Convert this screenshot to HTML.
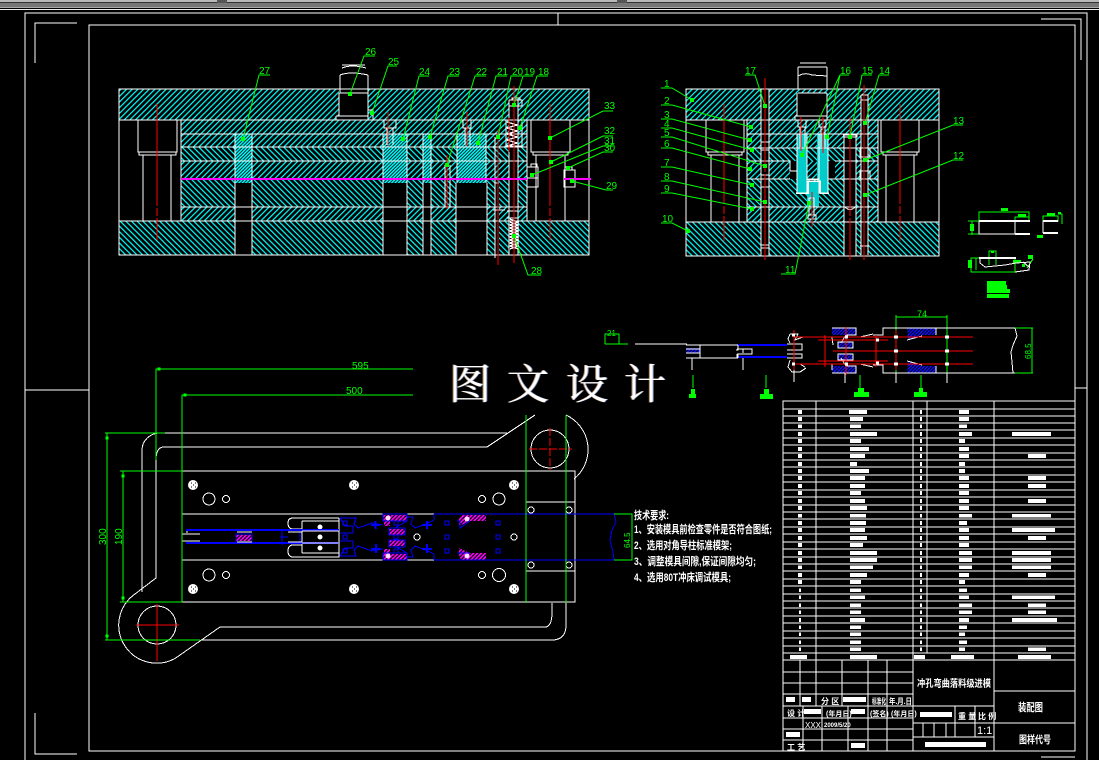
<!DOCTYPE html>
<html><head><meta charset="utf-8"><title>冲孔弯曲落料级进模 装配图</title>
<style>
html,body{margin:0;padding:0;background:#000;width:1099px;height:760px;overflow:hidden}
svg{position:absolute;left:0;top:0}
text{font-family:"Liberation Sans","Noto Sans CJK SC",sans-serif}
.g{fill:#0f0;font-size:10px;stroke:none}
.c{fill:#fff;font-size:8px;font-weight:700;stroke:none;font-family:"Liberation Sans","Noto Sans CJK SC",sans-serif}
.wm{position:absolute;top:352px;font:400 42px "Liberation Serif","Noto Serif CJK SC",serif;color:#fff;text-shadow:1px 0 0 #89b,-1px 0 0 #a86}
</style></head><body>
<svg width="1099" height="760" viewBox="0 0 1099 760" xmlns="http://www.w3.org/2000/svg">
<defs>
<pattern id="h1" width="4" height="4" patternUnits="userSpaceOnUse" patternTransform="rotate(45)"><rect width="4" height="4" fill="#000"/><rect width="1.2" height="4" fill="#0ff"/></pattern>
<pattern id="h2" width="4" height="4" patternUnits="userSpaceOnUse" patternTransform="rotate(-45)"><rect width="4" height="4" fill="#000"/><rect width="1.2" height="4" fill="#0ff"/></pattern>
<pattern id="hc" width="2.4" height="2.4" patternUnits="userSpaceOnUse" patternTransform="rotate(45)"><rect width="2.4" height="2.4" fill="#022"/><rect width="1.4" height="2.4" fill="#0ff"/></pattern>
<pattern id="hm" width="2.8" height="2.8" patternUnits="userSpaceOnUse" patternTransform="rotate(45)"><rect width="2.8" height="2.8" fill="#000"/><rect width="1.6" height="2.8" fill="#f0f"/></pattern>
<pattern id="hb" width="2.4" height="2.4" patternUnits="userSpaceOnUse" patternTransform="rotate(45)"><rect width="2.4" height="2.4" fill="#000"/><rect width="1.4" height="2.4" fill="#11f"/></pattern>
</defs>
<rect width="1099" height="760" fill="#000"/>
<!-- top bar -->
<rect x="0" y="0" width="1099" height="2" fill="#b9b9b9"/>
<rect x="0" y="2" width="1099" height="1" fill="#333"/>
<rect x="0" y="3" width="1099" height="4" fill="#777"/>
<rect x="0" y="7" width="1099" height="1" fill="#aaa"/>
<rect x="217" y="0" width="10" height="3" fill="#555"/>
<rect x="617" y="0" width="10" height="3" fill="#555"/>
<rect x="0" y="9" width="1099" height="1" fill="#eee"/>

<g fill="none" stroke="#fff" shape-rendering="crispEdges">
<!-- frames -->
<path d="M25 760V13H1087V760M89 25H1075V751H89ZM35 63V23H77M35 713V754H77M1041 19H1081V60M25 390H89M1075 388H1087M558 13V25M1041 757H1075" stroke-width="1"/>
</g>

<!-- LEFT SECTION VIEW -->
<g shape-rendering="crispEdges">
<rect x="119" y="89" width="470" height="31" fill="url(#h1)"/>
<rect x="119" y="221" width="470" height="34" fill="url(#h2)"/>
<rect x="181" y="120" width="346" height="14" fill="url(#h1)"/>
<rect x="181" y="134" width="346" height="13" fill="url(#h1)"/>
<rect x="181" y="147" width="346" height="14" fill="url(#h2)"/>
<rect x="181" y="161" width="346" height="18" fill="url(#h1)"/>
<rect x="181" y="179" width="346" height="28" fill="url(#h2)"/>
<rect x="181" y="207" width="346" height="14" fill="url(#h1)"/>
<g fill="#000">
<rect x="339" y="65" width="29" height="55"/><rect x="336" y="116" width="32" height="4"/>
<rect x="138" y="120" width="39" height="32"/><rect x="143" y="155" width="28" height="66"/>
<rect x="531" y="120" width="39" height="32"/><rect x="536" y="152" width="29" height="69"/>
<rect x="235" y="183" width="17" height="72"/><rect x="383" y="183" width="24" height="72"/>
<rect x="423" y="183" width="8" height="72"/><rect x="456" y="183" width="31" height="72"/>
<rect x="495" y="183" width="4" height="72"/><rect x="509" y="100" width="9" height="155"/>
<rect x="527" y="167" width="11" height="21"/><rect x="564" y="170" width="11" height="18"/>
</g>
<g fill="url(#hc)"><rect x="235" y="134" width="17" height="49"/><rect x="383" y="134" width="24" height="49"/><rect x="423" y="134" width="8" height="49"/><rect x="457" y="134" width="29" height="49"/></g>
<g fill="none" stroke="#fff">
<path d="M119 89H589V255H119ZM119 120H589M119 221H589"/>
<path d="M181 120V221M527 120V221M181 134H527M181 147H527M181 161H527M181 207H527"/>
<path d="M340 75V93H368V75M342 68Q352 64 366 68M340 75Q350 71 368 75M342 65H365M339 93V116M368 93V116M336 116H368V120M336 116V120M368 110H373V120"/>
<path d="M138 120V152H177V120M139 152V155H176V152M143 155V221M171 155V221"/>
<path d="M531 120V152H570V120M533 152V155H568V152M536 155V221M565 155V221"/>
<path d="M235 134V255M252 134V255M383 134V255M407 134V255M423 134V255M431 134V255M457 134V183M486 134V183M456 183V255M487 183V255M495 183V258M509 100V255M518 100V255M495 183H499"/>
<path d="M384 120H396V128H384ZM387 128V145M393 128V145M463 120H471V128H463ZM465 128V145M470 128V145"/>
<path d="M445 165V207M450 165V207M509 100H522V106H509M512 100V98H520V100M506 120H522M506 120V146H522V120"/>
<path d="M493 210H505M507 211H518V218H507M495 183V137"/>
<path d="M527 167H538V187H527ZM527 178H538M531 167V164H537V167"/>
<path d="M564 170H575V187H564ZM565 170V167H572V170"/>
</g>
<g stroke="#fff" stroke-width="1.3" fill="none"><path d="M510 219L518 222L510 225L518 228L510 231L518 234L510 237L518 240L510 243L518 246L510 249M510 222L518 225L510 228L518 231L510 234L518 237L510 240L518 243L510 246L518 249M507 122L517 125L507 128L517 131L507 134L517 137L507 140L517 143L507 146"/></g>
<g stroke="#f0f" stroke-width="2" fill="none"><path d="M181 179H527M564 179H591"/></g>
</g>
<path d="M157 104V206M157 208V216M157 218V240M550 104V206M550 208V216M550 218V240M388 112V146M467 112V146M447 155V209M498 130V265M514 86V263M509 118V152" fill="none" stroke="#f00" stroke-width="1" shape-rendering="crispEdges"/>

<!-- CENTER SECTION VIEW -->
<g shape-rendering="crispEdges">
<rect x="686" y="89" width="253" height="31" fill="url(#h1)"/>
<rect x="686" y="222" width="253" height="34" fill="url(#h2)"/>
<rect x="747" y="120" width="131" height="14" fill="url(#h1)"/>
<rect x="747" y="134" width="131" height="14" fill="url(#h1)"/>
<rect x="747" y="148" width="131" height="13" fill="url(#h2)"/>
<rect x="747" y="161" width="131" height="18" fill="url(#h1)"/>
<rect x="747" y="179" width="131" height="28" fill="url(#h2)"/>
<rect x="747" y="207" width="131" height="15" fill="url(#h1)"/>
<g fill="#000">
<rect x="797" y="93" width="30" height="27"/>
<rect x="706" y="120" width="38" height="32"/><rect x="711" y="155" width="28" height="67"/>
<rect x="881" y="120" width="38" height="32"/><rect x="886" y="155" width="28" height="67"/>
<rect x="761" y="89" width="8" height="167"/><rect x="844" y="135" width="12" height="121"/>
<rect x="861" y="95" width="7" height="161"/>
<rect x="790" y="161" width="8" height="18"/><rect x="828" y="161" width="7" height="18"/>
<rect x="739" y="120" width="8" height="102"/><rect x="878" y="120" width="8" height="102"/>
</g>
<g><rect x="797" y="134" width="10" height="59" fill="#0cc"/><rect x="817" y="134" width="11" height="59" fill="#0cc"/><rect x="807" y="181" width="12" height="26" fill="#0cc"/></g>
<g fill="none" stroke="#fff">
<path d="M686 89H939V256H686ZM686 120H939M686 222H939"/>
<path d="M747 120V222M878 120V222M747 134H878M747 148H878M747 161H790V171H797M747 179H790M835 161H878M828 179H878M747 207H878"/>
<path d="M798 67V89H827V67M800 63H826M798 67H827M798 76Q805 72 812 75L827 76M798 93H827M797 93V116M827 93V116M795 116H827V120M795 116V120"/>
<path d="M706 120V152H744V120M708 152V155H742V152M711 155V222M739 155V222"/>
<path d="M881 120V152H919V120M883 152V155H917V152M886 155V222M914 155V222"/>
<path d="M761 89V256M769 89V256M761 142H769M761 150H769M761 175H769M761 187H769M761 245H769M761 248H769"/>
<path d="M844 135V256M856 135V256M843 135H857V137H843M845 207Q850 212 855 207"/>
<path d="M861 95H868V100H861M861 95V255M868 95V255M860 148H870V157H860ZM860 171H870V179H860Z M860 246H869"/>
<path d="M797 134V193H807V179H819V193H828V134M807 134V179M819 134V179"/>
<path d="M798 120H806V127H798ZM800 127V147M805 127V147M819 120H826V127H819ZM821 127V147M825 127V147"/>
<path d="M809 198H814V215H809ZM808 215H816V219H808Z"/>
<path d="M746 120H745"/>
</g>
<path d="M796 193H808V181H820V193H829M807 179H819" stroke="#fff" stroke-width="1.5" fill="none"/>
</g>
<path d="M724 104V204M724 206V214M724 216V241M900 104V204M900 206V214M900 216V241M765 78V172M765 174V260M850 117V216M850 218V260M864 85V260M801 117V151M823 117V153M812 192V227" fill="none" stroke="#f00" stroke-width="1" shape-rendering="crispEdges"/>

<!-- green leaders -->
<g fill="none" stroke="#0f0" stroke-width="1">
<path d="M270 75H259L243 139M375 56H364L350 94M397 66H388L372 113M429 76H419L403 139M459 76H448L430 137M486 76H475L447 165M507 76H496L478 143M522 76H511L498 137M533 76H523L514 105M548 76H537L520 128"/>
<path d="M613 111H603L550 138M613 136H603L551 162M613 146H603L532 175M613 152H603L568 168M613 190H606L572 181M541 275H528L514 236"/>
<path d="M661 88H672L692 100M661 105H672L751 127M661 119H672L750 140M661 128H672L752 150M661 137H672L765 166M661 148H672L750 169M661 167H672L752 185M661 181H672L765 202M661 193H672L752 209M661 223H672L688 231"/>
<path d="M745 75H755L765 106M849 75H840L802 155M840 75L827 137M872 75H862L850 137M889 75H879L865 123M963 125H953L865 160M963 160H953L865 195M781 274H795L809 203"/>
</g>
<path d="M243 139h.01M350 94h.01M372 113h.01M403 139h.01M430 137h.01M447 165h.01M478 143h.01M498 137h.01M514 105h.01M520 128h.01M550 138h.01M551 162h.01M532 175h.01M568 168h.01M572 181h.01M514 236h.01M692 100h.01M751 127h.01M750 140h.01M752 150h.01M765 166h.01M750 169h.01M752 185h.01M765 202h.01M752 209h.01M688 231h.01M765 106h.01M802 155h.01M827 137h.01M850 137h.01M865 123h.01M865 160h.01M865 195h.01M809 203h.01" stroke="#0f0" stroke-width="4" stroke-linecap="square" fill="none" shape-rendering="crispEdges"/>
<g class="g" font-size="9">
<text class="g" x="259" y="74">27</text><text class="g" x="365" y="55">26</text><text class="g" x="388" y="65">25</text><text class="g" x="419" y="75">24</text><text class="g" x="449" y="75">23</text><text class="g" x="476" y="75">22</text><text class="g" x="497" y="75">21</text><text class="g" x="512" y="75">20</text><text class="g" x="524" y="75">19</text><text class="g" x="538" y="75">18</text>
<text class="g" x="604" y="109">33</text><text class="g" x="604" y="134">32</text><text class="g" x="604" y="144">31</text><text class="g" x="604" y="151">30</text><text class="g" x="606" y="189">29</text><text class="g" x="531" y="274">28</text>
<text class="g" x="664" y="87">1</text><text class="g" x="664" y="104">2</text><text class="g" x="664" y="118">3</text><text class="g" x="664" y="127">4</text><text class="g" x="664" y="136">5</text><text class="g" x="664" y="147">6</text><text class="g" x="664" y="166">7</text><text class="g" x="664" y="180">8</text><text class="g" x="664" y="192">9</text><text class="g" x="662" y="222">10</text>
<text class="g" x="745" y="74">17</text><text class="g" x="840" y="74">16</text><text class="g" x="862" y="74">15</text><text class="g" x="879" y="74">14</text><text class="g" x="953" y="124">13</text><text class="g" x="953" y="159">12</text><text class="g" x="785" y="273">11</text>
</g>

<!-- small parts -->
<g shape-rendering="crispEdges">
<path d="M979 221V212H1029V221M1015 221V217H1029M972 221V235M968 221H979M968 234H979M1043 221V216H1058V222M1058 214H1062V224M971 258H1015V272H971ZM976 258V270M989 265V251H996V265M1033 259L1027 268" fill="none" stroke="#0f0"/>
<g fill="#0f0"><rect x="970" y="224" width="4" height="7"/><rect x="1001" y="208" width="7" height="3"/><rect x="1018" y="214" width="8" height="3"/><rect x="1047" y="213" width="8" height="3"/><rect x="1058" y="212" width="3" height="2"/><rect x="1037" y="235" width="6" height="3"/><rect x="968" y="260" width="4" height="8"/><rect x="1013" y="260" width="8" height="3"/><rect x="1028" y="255" width="5" height="4"/><rect x="1022" y="264" width="3" height="3"/><rect x="991" y="251" width="3" height="2"/>
<rect x="987" y="281" width="19" height="4"/><rect x="987" y="285" width="20" height="4"/><rect x="987" y="289" width="23" height="4"/><rect x="987" y="294" width="22" height="4"/></g>
<path d="M979 221H1030M1015 234H1030M1043 221H1058M1043 233H1058M979 258H1016" stroke="#fff" stroke-width="2" fill="none"/>
<path d="M979 221V234H1015V221M1043 221V233M980 258V263L985 267L1005 265L1016 263L1030 262L1029 270L1015 272M1023 262L1029 267" stroke="#fff" fill="none"/>
</g>

<!-- BOTTOM PLAN VIEW -->
<g fill="none" stroke="#fff" shape-rendering="crispEdges">
<path d="M182 471H575V602H182ZM182 514H526M182 560H526M526 471V602M526 502H575M526 571H575"/>
<path d="M162 433H507M535 415L487 447H163Q156 448 156 460V578L133 595.5A38 38 0 0 0 175 658.5L220 627H545Q552 627 552 612V603M201 640H552Q566 640 566 625V603M142 592V450A18 17 0 0 1 160 433"/>
<path d="M566 415A38 38 0 0 1 574 479"/>
<circle cx="157" cy="625" r="19"/><circle cx="550" cy="449" r="19"/>
<circle cx="209" cy="499" r="6"/><circle cx="226" cy="499" r="3.5"/><circle cx="209" cy="575" r="6"/><circle cx="226" cy="575" r="3.5"/>
<circle cx="482" cy="499" r="3.5"/><circle cx="499" cy="499" r="6"/><circle cx="482" cy="575" r="3.5"/><circle cx="499" cy="575" r="6.5"/>
<circle cx="417" cy="537" r="3"/><circle cx="514" cy="537" r="3"/>
<circle cx="531" cy="510" r="3"/><circle cx="569" cy="510" r="3"/><circle cx="531" cy="565" r="3"/><circle cx="569" cy="565" r="3"/>
<path d="M339 518H293Q288 518 288 523Q288 529 293 529H302M302 521H339M339 553H302M302 545H293Q288 545 288 551Q288 557 293 557H339V518M302 521V553"/>
</g>
<g fill="#fff" stroke="#fff"><circle cx="193" cy="485" r="4.5"/><circle cx="354" cy="485" r="4.5"/><circle cx="193" cy="589" r="4.5"/><circle cx="354" cy="589" r="4.5"/><circle cx="514" cy="485" r="4.5"/><circle cx="514" cy="589" r="4.5"/></g>
<path d="M191 483h1M195 483h1M191 487h1M195 487h1M193 485h1M352 483h1M356 483h1M352 487h1M356 487h1M354 485h1M191 587h1M195 587h1M191 591h1M195 591h1M193 589h1M352 587h1M356 587h1M352 591h1M356 591h1M354 589h1M512 483h1M516 483h1M512 487h1M516 487h1M514 485h1M512 587h1M516 587h1M512 591h1M516 591h1M514 589h1" stroke="#000" stroke-width="1" fill="none" shape-rendering="crispEdges"/>
<g fill="#fff"><circle cx="320" cy="527" r="2.5"/><circle cx="320" cy="537" r="2.5"/><circle cx="320" cy="548" r="2.5"/></g>
<g fill="url(#hm)" shape-rendering="crispEdges"><rect x="383" y="515" width="24" height="6"/><rect x="389" y="529" width="16" height="6"/><rect x="389" y="540" width="16" height="6"/><rect x="383" y="554" width="24" height="6"/><rect x="384" y="520" width="6" height="6"/><rect x="384" y="549" width="6" height="6"/><path d="M461 515H486V521H470L459 526V519Z"/><path d="M461 560H486V553H470L459 548V555Z"/><rect x="236" y="535" width="16" height="6"/></g>
<g fill="none" stroke="#00f" stroke-width="1" shape-rendering="crispEdges">
<rect x="383" y="514" width="24" height="7"/><rect x="389" y="528" width="16" height="7"/><rect x="389" y="540" width="16" height="7"/><rect x="383" y="553" width="24" height="7"/><rect x="236" y="534" width="16" height="8"/>
<path d="M434 514H614M434 560H614M434 514V520M434 560V554M614 514L616 522L612 530L610 540L613 552L614 560"/>
<path d="M340 518H356L354 524L358 528L372 523L383 525M340 556H356L354 550L358 546L372 551L383 549M340 518L345 526H353V533H340M340 556L345 548H353V541H340"/>
<path d="M407 517H413L411 524L415 528L428 523L434 520M407 557H413L411 550L415 546L428 551L434 554M407 521L395 528M407 553L395 546"/>
<path d="M457 521H460L460 528L470 521M457 553L470 553"/>
<rect x="343" y="521" width="4" height="4"/><rect x="343" y="549" width="4" height="4"/><rect x="343" y="535" width="4" height="4"/><rect x="394" y="521" width="4" height="4"/><rect x="394" y="549" width="4" height="4"/><rect x="394" y="535" width="4" height="4"/>
<rect x="445" y="521" width="4" height="4"/><rect x="445" y="535" width="4" height="4"/><rect x="445" y="549" width="4" height="4"/><rect x="496" y="521" width="4" height="4"/><rect x="496" y="535" width="4" height="4"/><rect x="496" y="549" width="4" height="4"/>
<path d="M300 530V543M282 529V545M280 537H288"/>
</g>
<path d="M186 530H339M186 543H339" stroke="#00f" stroke-width="2" fill="none" shape-rendering="crispEdges"/>
<path d="M186 532H188M237 532H252M237 542H252M288 532H302M288 542H302M302 531H339M302 543H339M182 534H200M182 541H200" stroke="#fff" fill="none" shape-rendering="crispEdges"/>
<path d="M371 525h9M375.5 521v8M422 525h10M427 521v8M371 549h10M376 544v9M422 549h10M427 544v9" stroke="#00f" stroke-width="2" fill="none" shape-rendering="crispEdges"/>
<g fill="#fff"><circle cx="388" cy="518" r="2.5" fill="#fdf"/><circle cx="388" cy="556" r="2.5" fill="#fdf"/><circle cx="467" cy="519" r="2.5" fill="#fdf"/><circle cx="467" cy="556" r="2.5" fill="#fdf"/></g>
<path d="M157 604V661M136 625H179" stroke="#f00" fill="none" shape-rendering="crispEdges"/>
<path d="M550 428V470M529 449H572" stroke="#f00" stroke-dasharray="8 2" fill="none" shape-rendering="crispEdges"/>
<!-- dims -->
<g fill="none" stroke="#0f0" shape-rendering="crispEdges">
<path d="M156 460V369H413M182 602V395H413M105 433H165M105 640H200M107 433V640M120 471H182M120 602H182M123 471V602M526 415V603M566 415V603"/>
<path d="M614 514H632V560H614"/>
</g>
<path d="M159 369h.01M185 395h.01M107 438h.01M107 636h.01M123 476h.01M123 598h.01" stroke="#0f0" stroke-width="3" stroke-linecap="square" fill="none" shape-rendering="crispEdges"/>
<text class="g" x="352" y="369">595</text>
<text class="g" x="346" y="394">500</text>
<text class="g" transform="translate(106,545) rotate(-90)">300</text>
<text class="g" transform="translate(122,545) rotate(-90)">190</text>
<text class="g" style="font-size:8px" transform="translate(630,548) rotate(-90)">64.5</text>

<!-- technical requirements -->
<g fill="#fff" font-weight="700">
<text x="634" y="519" textLength="35" lengthAdjust="spacingAndGlyphs" style="font-size:11px">技术要求:</text>
<text x="634" y="533" textLength="138" lengthAdjust="spacingAndGlyphs" style="font-size:11px">1、安装模具前检查零件是否符合图纸;</text>
<text x="634" y="549" textLength="98" lengthAdjust="spacingAndGlyphs" style="font-size:11px">2、选用对角导柱标准模架;</text>
<text x="634" y="565" textLength="122" lengthAdjust="spacingAndGlyphs" style="font-size:11px">3、调整模具间隙,保证间隙均匀;</text>
<text x="634" y="581" textLength="97" lengthAdjust="spacingAndGlyphs" style="font-size:11px">4、选用80T冲床调试模具;</text>
</g>

<!-- STRIP TOP RIGHT -->
<g shape-rendering="crispEdges" fill="none">
<path d="M605 344V334H619V344M605 344H628" stroke="#0f0"/>
<text class="g" x="607" y="336" style="font-size:8px">21</text>
<path d="M896 373V315M947 373V315M896 317H947M1015 328H1033M1015 373H1033M1032 328V373" stroke="#0f0"/>
<text class="g" x="917" y="317" style="font-size:9px">74</text>
<text class="g" style="font-size:8px" transform="translate(1031,359) rotate(-90)">68.5</text>
<path d="M693 375V388M766 375V388M860 375V390M921 375V390" stroke="#0f0"/>
<g fill="#0f0"><rect x="689" y="394" width="7" height="4"/><rect x="691" y="389" width="4" height="5"/><rect x="760" y="394" width="13" height="5"/><rect x="764" y="389" width="5" height="5"/><rect x="854" y="392" width="15" height="5"/><rect x="858" y="388" width="6" height="4"/><rect x="914" y="392" width="13" height="5"/><rect x="919" y="388" width="4" height="4"/></g>
<rect x="686" y="348" width="14" height="5" fill="url(#hb)"/>
<rect x="832" y="328" width="24" height="7" fill="url(#hb)"/><rect x="838" y="342" width="15" height="6" fill="url(#hb)"/><rect x="838" y="354" width="15" height="6" fill="url(#hb)"/><rect x="832" y="366" width="24" height="7" fill="url(#hb)"/>
<path d="M907 328H936V335H922L908 340Z" fill="url(#hb)"/><path d="M907 373H936V366H922L908 361Z" fill="url(#hb)"/>
<path d="M737 345H787M737 357H787" stroke="#00f" stroke-width="2"/>
<g stroke="#fff">
<path d="M635 344H687M686 345H738M686 358H738M686 349H700M686 353H700M700 345V358M738 345V350H736M738 358V354M737 349H752V354H737M737 354V358M743 349V353"/>
<path d="M787 344H802V350H787M787 354H802V358H787M790 334H798L795 340L803 337M790 334L788 339L790 343M790 360L788 367L792 372H800L806 368M798 364H800L805 367"/>
<path d="M818 337H832L833 345M818 364H832V370M832 328H856V335H846L841 343M832 373H856V366H846L841 358M838 342H853V348H838ZM838 354H853V360H838Z"/>
<path d="M850 337H860L873 334M850 364H860L873 367M873 335H883V328H1015M873 365H883V373H1015M1015 328L1017 336L1013 345L1011 352L1012 362L1013 373"/>
<path d="M907 328H936V335M907 373H936V366M907 340L922 336M907 361L922 365"/>
<path d="M692 358V370M743 358V370M794 370V382M845 373V383M896 373V383M947 373V383"/>
</g>
<g stroke="#f00">
<path d="M794 337H973M818 340H888M833 351H973M794 364H973M818 361H888M794 330V370M825 335V367M846 327V375M876 335V367M896 330V370"/>
</g>
</g>
<path d="M792 335h3M792 364h3M845 337h3M845 364h3M876 340h3M876 363h3M894 337h4M894 351h4M894 364h4M945 337h4M945 351h4M945 364h4" stroke="#fff" stroke-width="3" fill="none" shape-rendering="crispEdges"/>

<!-- PARTS TABLE -->
<g fill="none" stroke="#fff" shape-rendering="crispEdges">
<rect x="783" y="401" width="292" height="350"/>
<path d="M816 401V660M913 401V660M927 401V653M994 401V751M783 409H1075M783 416H1075M783 423H1075M783 430H1075M783 438H1075M783 445H1075M783 453H1075M783 460H1075M783 467H1075M783 475H1075M783 482H1075M783 490H1075M783 497H1075M783 505H1075M783 512H1075M783 519H1075M783 527H1075M783 534H1075M783 542H1075M783 549H1075M783 557H1075M783 564H1075M783 571H1075M783 579H1075M783 586H1075M783 594H1075M783 601H1075M783 608H1075M783 616H1075M783 623H1075M783 631H1075M783 638H1075M783 646H1075M783 653H1075M783 660H1075"/>
<path d="M783 672H913M783 683H913M783 694H913M783 706H994M783 718H913M783 729H913M783 740H913M800 660V706M816 660V706M842 660V706M868 660V751M887 660V751M803 706V751M822 706V751M848 706V751M913 660V751M913 723H994M913 737H994M955 706V737M975 706V737M923 723V737M934 723V737M946 723V737M994 691H1075M994 723H1075"/>
</g>
<g fill="none" stroke="#fff" stroke-width="3.6" shape-rendering="crispEdges">
<!-- col 1 -->
<path d="M798 412h4M798 419h4M798 426.3h4M798 434h4M798 441h4M798 449h4M798 456h4M798 464h4M798 471h4M798 478h4M798 486h4M798 493h4M798 501h4M798 508h4M798 515.7h4M798 523h4M798 530h4M798 538h4M798 545h4M798 553h4M798 560h4M798 567.3h4M798 575h4M798 582h4M799 590.3h2M799 597.3h2M799 605.3h2M799 612.3h2M799 620h2M799 627.3h2M799 634.3h2M799 642.3h2M799 649.3h2M790 657h17"/>
<!-- col 2 -->
<path d="M849 412h18M850 419h13M850 426.3h11M850 434h27M850 441h11M850 449h19M850 456h15M850 464h7M850 471h19M850 478h15M850 486h15M850 493h11M850 501h15M850 508h17M850 515.7h16M850 523h16M850 530h15M850 538h17M850 545h13M850 553h27M850 560h27M850 567.3h23M850 575h17M850 582h11M850 590.3h11M850 597.3h15M850 605.3h11M850 612.3h11M850 620h15M850 627.3h11M850 634.3h11M850 642.3h11M850 649.3h11M850 657h27"/>
<!-- col 3 -->
<path d="M920 412h2M920 419h2M920 426.3h2M920 434h2M920 441h2M920 449h2M920 456h2M920 464h2M920 471h2M920 478h2M920 486h2M920 493h2M920 501h2M920 508h2M920 515.7h2M920 523h2M920 530h2M920 538h2M920 545h2M920 553h2M920 560h2M920 567.3h2M920 575h2M920 582h2M920 590.3h2M920 597.3h2M920 605.3h2M920 612.3h2M920 620h2M920 627.3h2M920 634.3h2M920 642.3h2M920 649.3h2M914 657h11"/>
<!-- col 4 -->
<path d="M959 412h10M959 419h10M959 426.3h8M959 434h13M959 441h6M959 449h10M959 456h10M959 464h6M959 471h6M959 478h10M959 486h10M959 493h10M959 501h10M959 508h10M959 515.7h13M959 523h8M959 530h10M959 538h10M959 545h10M959 553h13M959 560h13M959 567.3h13M959 575h10M959 582h6M959 590.3h8M959 597.3h10M959 605.3h13M959 612.3h13M959 620h10M959 627.3h8M959 634.3h6M959 642.3h8M959 649.3h6M951 657h23"/>
<!-- col 5 -->
<path d="M1012 434h39M1028 456h18M1028 478h18M1028 486h18M1028 501h18M1012 515.7h39M1012 530h43M1028 538h18M1012 553h39M1012 560h39M1012 567.3h39M1028 575h18M1012 597.3h43M1028 605.3h18M1028 612.3h18M1012 620h45M1028 649.3h18M1018 657h33"/>
</g>
<g fill="#fff" shape-rendering="crispEdges">
<rect x="786" y="697" width="9" height="5"/><rect x="802" y="697" width="9" height="5"/><rect x="843" y="697" width="23" height="5"/><rect x="804" y="709" width="17" height="5"/><rect x="851" y="709" width="14" height="5"/><rect x="786" y="732" width="14" height="5"/><rect x="851" y="743" width="14" height="5"/><rect x="920" y="712" width="32" height="5"/><rect x="925" y="742" width="61" height="5"/>
</g>
<g class="c">
<text class="c" x="821" y="704">分 区</text>
<text class="c" x="872" y="704" textLength="14" lengthAdjust="spacingAndGlyphs">标准化</text>
<text class="c" x="889" y="704" textLength="23" lengthAdjust="spacingAndGlyphs">年.月.日</text>
<text class="c" x="787" y="716">设 计</text>
<text class="c" x="826" y="716" style="font-size:7px">(年月日)</text>
<text class="c" x="870" y="716" style="font-size:7px">(签名)</text>
<text class="c" x="891" y="716" style="font-size:7px">(年月日)</text>
<text class="c" x="958" y="719">重 量</text>
<text class="c" x="978" y="719">比 例</text>
<text class="c" x="787" y="750">工 艺</text>
<text class="c" x="917" y="687" textLength="74" lengthAdjust="spacingAndGlyphs" style="font-size:10px">冲孔弯曲落料级进模</text>
<text class="c" x="1018" y="711" textLength="25" lengthAdjust="spacingAndGlyphs" style="font-size:11px">装配图</text>
<text class="c" x="1019" y="743" textLength="32" lengthAdjust="spacingAndGlyphs" style="font-size:10.5px">图样代号</text>
</g>
<text x="977" y="734" fill="#fff" font-size="11">1:1</text>
<text x="805" y="728" fill="#fff" font-size="8">XXX</text>
<text x="824" y="727" fill="#fff" font-size="6" font-weight="700">2009/5/20</text>
</svg>
<div class="wm" style="left:449px">图</div>
<div class="wm" style="left:507px">文</div>
<div class="wm" style="left:566px">设</div>
<div class="wm" style="left:624px">计</div>
</body></html>
